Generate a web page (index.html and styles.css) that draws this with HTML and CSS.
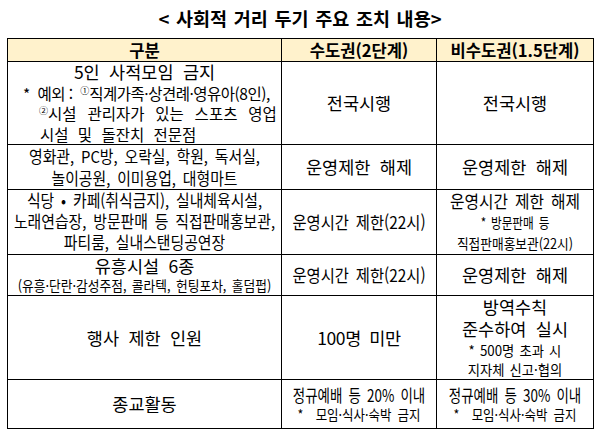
FILE: index.html
```html
<!DOCTYPE html>
<html lang="ko">
<head>
<meta charset="utf-8">
<link rel="stylesheet" href="styles.css">
</head>
<body>
<div class="page">
  <h1 class="title">&lt; 사회적 거리 두기 주요 조치 내용&gt;</h1>
  <table class="measures">
    <colgroup>
      <col class="c1"><col class="c2"><col class="c3">
    </colgroup>
    <thead>
      <tr class="head">
        <th>구분</th>
        <th>수도권(2단계)</th>
        <th>비수도권(1.5단계)</th>
      </tr>
    </thead>
    <tbody>
      <tr class="r1">
        <td class="left">
          <div class="center big">5인 사적모임 금지</div>
          <div class="ex1">* &nbsp;예외 : &nbsp;<sup>①</sup>직계가족·상견례·영유아(8인),</div>
          <div class="ex2"><sup>②</sup>시설 관리자가 있는 스포츠 영업</div>
          <div class="ex3">시설 및 돌잔치 전문점</div>
        </td>
        <td class="big">전국시행</td>
        <td class="big">전국시행</td>
      </tr>
      <tr class="r2">
        <td>
          <div class="fit cond">영화관, PC방, 오락실, 학원, 독서실,</div>
          <div class="fit cond">놀이공원, 이미용업, 대형마트</div>
        </td>
        <td class="big">운영제한 해제</td>
        <td class="big">운영제한 해제</td>
      </tr>
      <tr class="r3">
        <td>
          <div class="fit cond">식당 • 카페(취식금지), 실내체육시설,</div>
          <div class="fit cond">노래연습장, 방문판매 등 직접판매홍보관,</div>
          <div class="fit cond">파티룸, 실내스탠딩공연장</div>
        </td>
        <td><div class="fit hours">운영시간 제한(22시)</div></td>
        <td>
          <div class="fit lift">운영시간 제한 해제</div>
          <div class="fit note-a">* 방문판매 등</div>
          <div class="fit note-b">직접판매홍보관(22시)</div>
        </td>
      </tr>
      <tr class="r4">
        <td>
          <div class="big line21">유흥시설 6종</div>
          <div class="fit sub">(유흥·단란·감성주점, 콜라텍, 헌팅포차, 홀덤펍)</div>
        </td>
        <td><div class="fit hours">운영시간 제한(22시)</div></td>
        <td class="big">운영제한 해제</td>
      </tr>
      <tr class="r5">
        <td class="big">행사 제한 인원</td>
        <td class="big num">100명 미만</td>
        <td>
          <div class="big line22">방역수칙</div>
          <div class="big line22">준수하여 실시</div>
          <div class="fit small3 first">* 500명 초과 시</div>
          <div class="fit small3">지자체 신고·협의</div>
        </td>
      </tr>
      <tr class="r6">
        <td class="big">종교활동</td>
        <td>
          <div class="fit worship">정규예배 등 20% 이내</div>
          <div class="fit small2">* &nbsp;모임·식사·숙박 금지</div>
        </td>
        <td>
          <div class="fit worship">정규예배 등 30% 이내</div>
          <div class="fit small2">* &nbsp;모임·식사·숙박 금지</div>
        </td>
      </tr>
    </tbody>
  </table>
</div>
</body>
</html>
```
FILE: styles.css
```css
html, body {
  margin: 0;
  padding: 0;
  background: #fff;
}
body {
  font-family: "Noto Sans CJK KR", "Noto Sans", sans-serif;
  color: #000;
}
.page {
  width: 600px;
  padding: 6px 0 0 7px;
  box-sizing: border-box;
}
.title {
  margin: 0 0 8px 0;
  padding-right: 7px;
  font-size: 18.5px;
  line-height: 24px;
  font-weight: bold;
  text-align: center;
  word-spacing: 1.5px;
  letter-spacing: 0;
}
.measures {
  border-collapse: collapse;
  table-layout: fixed;
  width: 586px;
}
.c1 { width: 274px; }
.c2 { width: 155px; }
.c3 { width: 157px; }
.measures th,
.measures td {
  border: 1px solid #000;
  padding: 0;
  text-align: center;
  vertical-align: middle;
  font-size: 15px;
  line-height: 21px;
  word-spacing: 3px;
  letter-spacing: 0;
  overflow: visible;
}
.head th {
  background: #fff2cc;
  font-weight: bold;
  font-size: 16.6px;
  height: 22px;
  line-height: 20px;
  word-spacing: 0;
}
.r1 td { height: 80px; line-height: 20.5px; }
.r2 td { height: 44px; line-height: 22px; }
.r3 td { height: 63px; }
.r4 td { height: 40px; }
.r5 td { height: 82px; }
.r6 td { height: 48px; }
td.left { text-align: left; }
.center { text-align: center; }
.measures .big {
  font-size: 17.5px;
  letter-spacing: 0;
  word-spacing: 4.5px;
}
.measures .num {
  letter-spacing: -0.4px;
  word-spacing: 4px;
}
/* horizontally condensed line (like 장평 in the source document) */
.fit {
  display: flex;
  justify-content: center;
  white-space: nowrap;
}
.cond {
  font-size: 16.5px;
  word-spacing: 3px;
  transform: scaleX(0.9);
}
.ex1 {
  padding-left: 15px;
  font-size: 15.5px;
  letter-spacing: -0.5px;
  word-spacing: 0;
  white-space: nowrap;
}
.ex2 {
  padding-left: 31px;
  font-size: 15.5px;
  word-spacing: 6.5px;
  white-space: nowrap;
}
.ex3 {
  padding-left: 32px;
  font-size: 15.5px;
  word-spacing: 5px;
}
sup {
  font-size: 9px;
  line-height: 0;
  vertical-align: 6px;
  letter-spacing: 0;
}
.hours {
  font-size: 17.5px;
  word-spacing: 3px;
  transform: scaleX(0.877);
}
.lift {
  font-size: 17.5px;
  line-height: 21.5px;
  word-spacing: 3px;
  transform: scaleX(0.9);
}
.note-a {
  font-size: 14px;
  line-height: 21px;
  word-spacing: 2px;
  transform: scaleX(0.83);
}
.note-b {
  font-size: 14px;
  line-height: 21px;
  transform: scaleX(0.907);
}
.line21 { line-height: 21px; }
.line22 { line-height: 22px; }
.sub {
  font-size: 14px;
  line-height: 19px;
  word-spacing: 2px;
  transform: scaleX(0.91);
}
.small3 {
  font-size: 14px;
  line-height: 19px;
  word-spacing: 1.5px;
  transform: scaleX(0.95);
}
.small3.first { line-height: 20px; }
.worship {
  font-size: 17.5px;
  line-height: 21px;
  word-spacing: 3px;
  transform: scaleX(0.77);
}
.small2 {
  font-size: 14px;
  line-height: 19px;
  word-spacing: 3px;
  transform: scaleX(0.89);
}
```
